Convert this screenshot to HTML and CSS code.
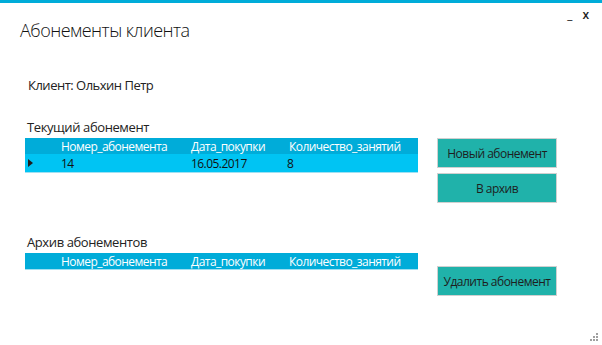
FILE: index.html
```html
<!DOCTYPE html>
<html lang="ru">
  <head>
    <meta charset="UTF-8">
    <title>Абонементы клиента</title>
    <link rel="stylesheet" href="styles.css">
  </head>
  <body>
    <div class="window-controls">
      <span class="minimize">_</span>
      <span class="close">x</span>
    </div>
    <h1 class="title">Абонементы клиента</h1>

    <p class="client">Клиент: Ольхин Петр</p>

    <div class="section current">
      <div class="section-left">
        <div class="caption">Текущий абонемент</div>
        <div class="grid">
          <div class="grid-row grid-header">
            <span class="cell indicator"></span>
            <span class="cell col-num">Номер_абонемента</span>
            <span class="cell col-date">Дата_покупки</span>
            <span class="cell col-count">Количество_занятий</span>
          </div>
          <div class="grid-row grid-data">
            <span class="cell indicator">
              <svg width="5" height="8" viewBox="0 0 5 8">
                <path d="M0 0 L5 4 L0 8 Z" fill="#1e1e1e" />
              </svg>
            </span>
            <span class="cell col-num">14</span>
            <span class="cell col-date">16.05.2017</span>
            <span class="cell col-count">8</span>
          </div>
        </div>
      </div>
      <div class="buttons">
        <button class="tile-button">Новый абонемент</button>
        <button class="tile-button">В архив</button>
      </div>
    </div>

    <div class="section archive">
      <div class="section-left">
        <div class="caption">Архив абонементов</div>
        <div class="grid">
          <div class="grid-row grid-header">
            <span class="cell indicator"></span>
            <span class="cell col-num">Номер_абонемента</span>
            <span class="cell col-date">Дата_покупки</span>
            <span class="cell col-count">Количество_занятий</span>
          </div>
        </div>
      </div>
      <div class="buttons">
        <button class="tile-button">Удалить абонемент</button>
      </div>
    </div>

    <div class="resize-grip">
      <svg width="10" height="10" viewBox="0 0 10 10">
        <rect x="8" y="2" width="2" height="2" fill="#a0a0a0" />
        <rect x="5" y="5" width="2" height="2" fill="#a0a0a0" />
        <rect x="8" y="5" width="2" height="2" fill="#a0a0a0" />
        <rect x="2" y="8" width="2" height="2" fill="#a0a0a0" />
        <rect x="5" y="8" width="2" height="2" fill="#a0a0a0" />
        <rect x="8" y="8" width="2" height="2" fill="#a0a0a0" />
      </svg>
    </div>
  </body>
</html>
```

FILE: styles.css
```css
html {
  background-color: #ffffff;
}
body {
  margin: 0;
  width: 602px;
  height: 345px;
  box-sizing: border-box;
  border-top: 3px solid #00acd9;
  font-family: "Open Sans", "Noto Sans", sans-serif;
  color: #222222;
  position: relative;
  overflow: hidden;
}
.window-controls {
  position: absolute;
  top: 3px;
  right: 13px;
  display: flex;
  gap: 10px;
  font-size: 12px;
  font-weight: 600;
  color: #1e1e1e;
}
.title {
  margin: 14px 0 0 20px;
  font-size: 18px;
  font-weight: 300;
  letter-spacing: -0.5px;
  line-height: 27px;
  color: #111111;
}
.client {
  margin: 33px 0 0 28px;
  font-size: 13px;
  letter-spacing: -0.5px;
  line-height: 17px;
}
.section {
  display: flex;
  align-items: flex-start;
  margin-left: 25px;
}
.current {
  margin-top: 25px;
}
.archive {
  margin-top: 31px;
}
.section-left {
  width: 393px;
}
.caption {
  margin-left: 2px;
  font-size: 13px;
  letter-spacing: -0.4px;
  line-height: 17px;
  margin-bottom: 2px;
}
.grid {
  width: 393px;
  font-size: 12px;
  letter-spacing: -0.55px;
  border-bottom: 1px solid #9fe0f2;
}
.grid-row {
  display: flex;
  align-items: center;
}
.grid-header {
  height: 16px;
  background-color: #00acd9;
  color: #ffffff;
}
.grid-data {
  height: 18px;
  background-color: #00c4f3;
  color: #111111;
}
.cell {
  white-space: nowrap;
}
.indicator {
  width: 36px;
  padding-left: 3px;
  box-sizing: border-box;
  display: flex;
  align-items: center;
}
.col-num {
  width: 130px;
}
.col-date {
  width: 98px;
}
.grid-data .col-count {
  margin-left: -2px;
}
.buttons {
  margin-left: 19px;
  display: flex;
  flex-direction: column;
  gap: 5px;
}
.current .buttons {
  margin-top: 19px;
}
.archive .buttons {
  margin-top: 32px;
}
.tile-button {
  width: 120px;
  height: 30px;
  background-color: #20b2aa;
  border: 1px solid #d0d0d0;
  color: #1e1e1e;
  font-family: "Open Sans", "Noto Sans", sans-serif;
  font-size: 12px;
  letter-spacing: -0.5px;
  padding: 0;
}
.resize-grip {
  position: absolute;
  right: 4px;
  bottom: 4px;
  line-height: 0;
}
```
